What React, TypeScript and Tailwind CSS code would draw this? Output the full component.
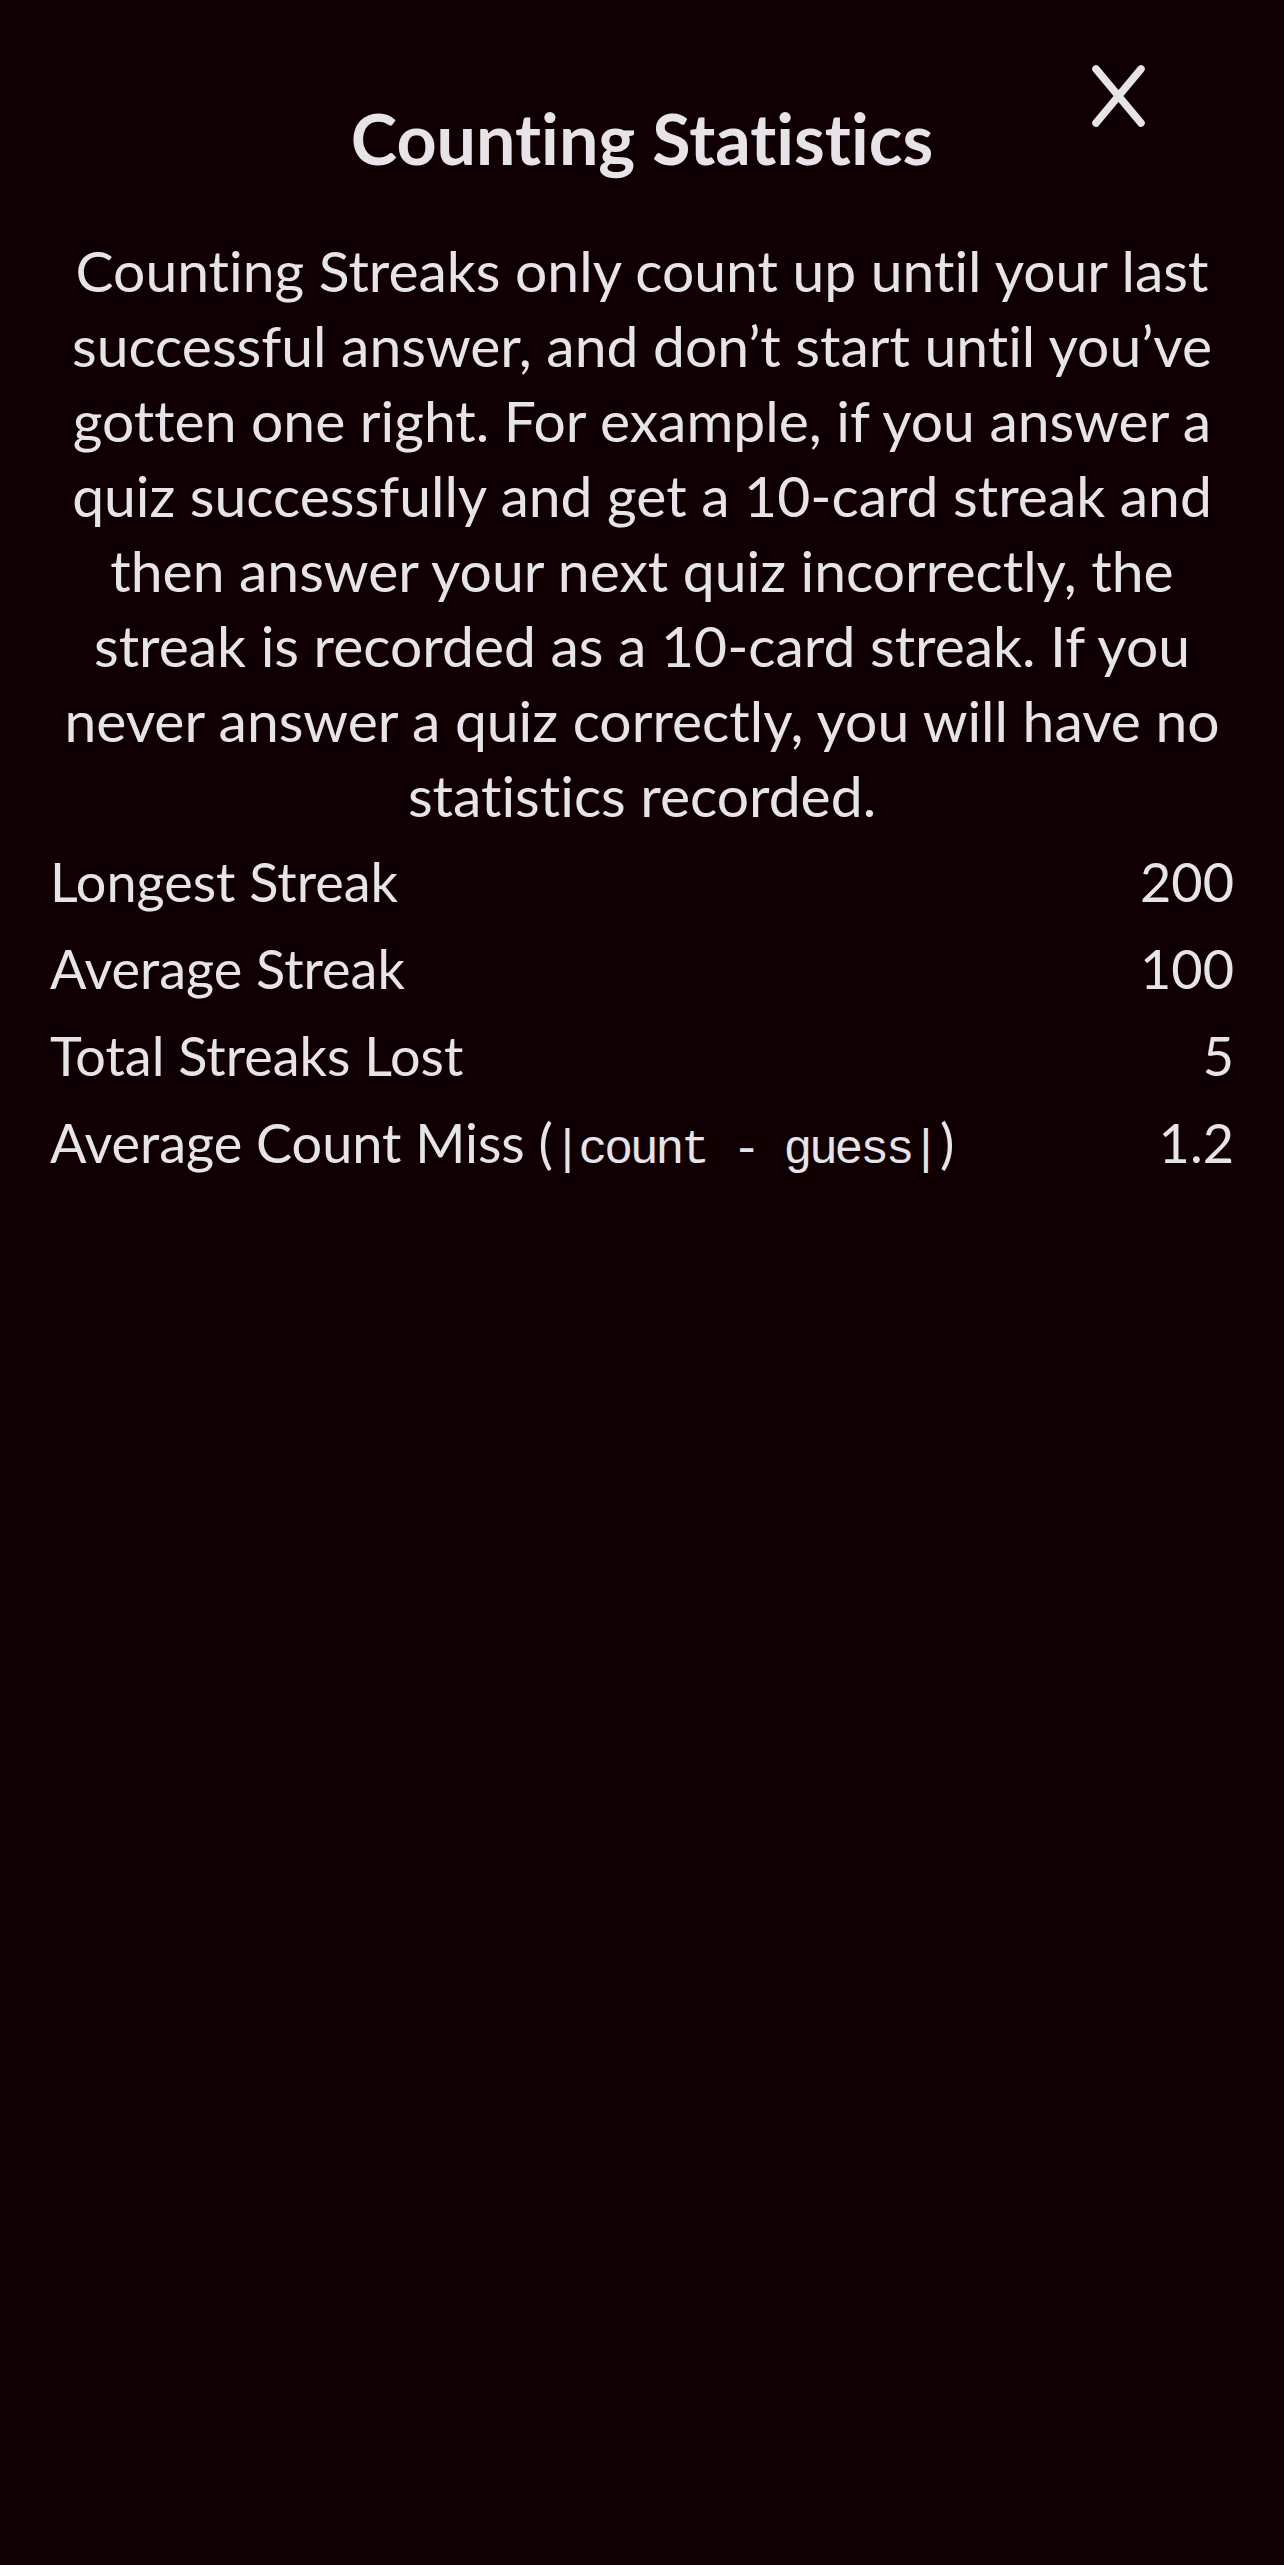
import React from "react";

const lines = [
  "Counting Streaks only count up until your last",
  "successful answer, and don\u2019t start until you\u2019ve",
  "gotten one right. For example, if you answer a",
  "quiz successfully and get a 10-card streak and",
  "then answer your next quiz incorrectly, the",
  "streak is recorded as a 10-card streak. If you",
  "never answer a quiz correctly, you will have no",
  "statistics recorded.",
];

const stats: { label: React.ReactNode; value: string }[] = [
  { label: "Longest Streak", value: "200" },
  { label: "Average Streak", value: "100" },
  { label: "Total Streaks Lost", value: "5" },
  {
    label: (
      <>
        Average Count Miss (
        <span className="font-['Liberation_Mono',monospace] text-[48px] tracking-[-3.2px] whitespace-pre">|count - guess|</span>
        <span className="ml-[3px]">)</span>
      </>
    ),
    value: "1.2",
  },
];

export default function App() {
  return (
    <div className="relative min-h-screen w-full bg-[#100003] text-[#e6e4e8] font-['Lato','Noto_Sans',sans-serif] [font-variant-ligatures:none]">
      <button
        aria-label="Close"
        className="absolute left-[1092px] top-[65px] w-[53px] h-[62px]"
      >
        <svg viewBox="0 0 53 62" width="53" height="62">
          <path d="M4 4 L49 58 M49 4 L4 58" stroke="#e6e4e8" strokeWidth="7.5" strokeLinecap="round" fill="none" />
        </svg>
      </button>
      <div className="flex flex-col pt-[103px] px-[50px]">
        <h1 className="text-center font-bold text-[70px] leading-[71px]">Counting Statistics</h1>
        <p className="mt-[59px] text-center text-[57px] leading-[75px]">
          {lines.map((l, i) => (
            <React.Fragment key={i}>
              {l}
              {i < lines.length - 1 && <br />}
            </React.Fragment>
          ))}
        </p>
        <div className="mt-[5px] flex flex-col">
          {stats.map((s, i) => (
            <div key={i} className="flex items-baseline justify-between text-[54px] leading-[87px]">
              <span>{s.label}</span>
              <span>{s.value}</span>
            </div>
          ))}
        </div>
      </div>
    </div>
  );
}
